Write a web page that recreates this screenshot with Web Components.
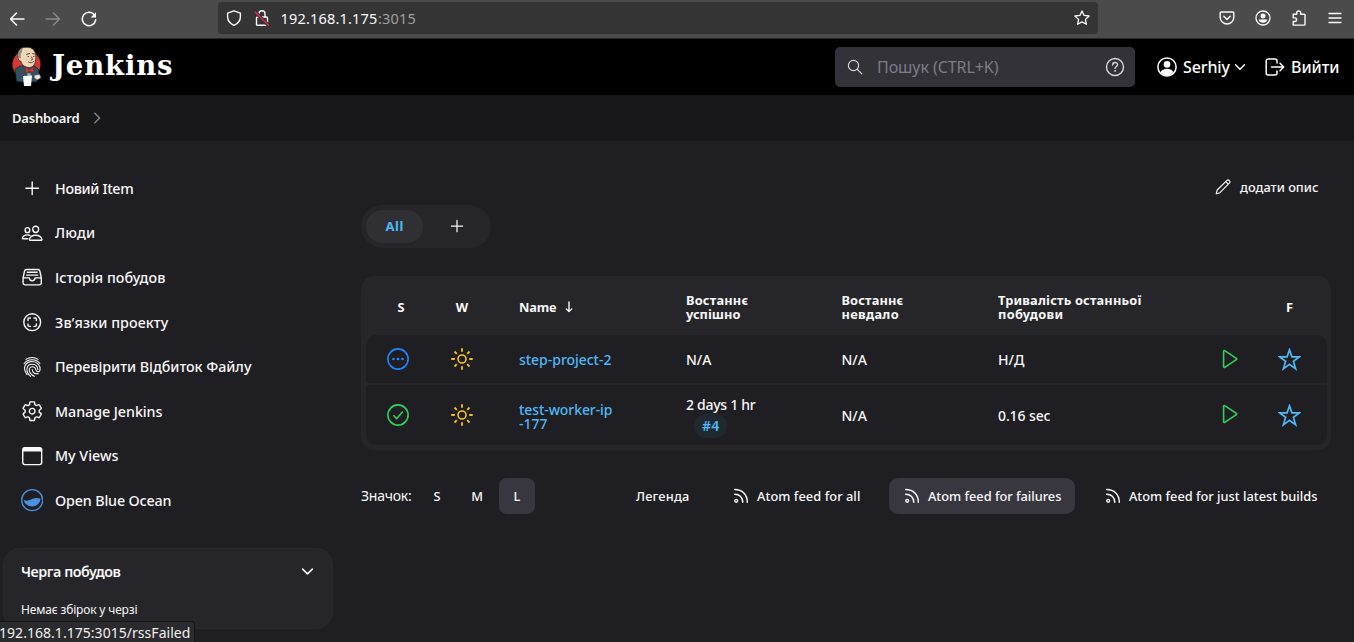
<!DOCTYPE html>
<html lang="uk">
<head>
<meta charset="utf-8">
<title>Dashboard [Jenkins]</title>
<style>
html,body{margin:0;height:100%}
body{background:#1f1e23;color:#f8f8f8;font-family:"Noto Sans","Open Sans",sans-serif;overflow:hidden;width:1354px;height:642px;position:relative}
</style>
</head>
<body>
<browser-bar></browser-bar>
<app-header></app-header>
<bread-crumbs></bread-crumbs>
<dashboard-page></dashboard-page>
<link-status></link-status>
<script>
const ICONS={
 back:['0 0 16 16','<path d="M15 8H1.5M7.5 2L1.5 8l6 6" stroke-width="1.5"/>'],
 fwd:['0 0 16 16','<path d="M1 8h13.5M8.500 2l6 6-6 6" stroke-width="1.300"/>'],
 reload:['0 0 16 16','<path d="M13.600 4.300A6.700 6.700 0 1 0 14.700 8.500" stroke-width="1.500"/><path d="M15 1.200v5.300H9.700z" fill="currentColor" stroke="none"/>'],
 shield:['0 0 16 16','<path d="M8 .8l6.400 2.300v3.600c0 3.800-2.600 6.900-6.400 8.600C4.200 13.600 1.600 10.500 1.600 6.700V3.100z" stroke-width="1.400"/>'],
 lock:['0 0 16 18','<rect x="2.500" y="8" width="11" height="8.300" rx="1" stroke-width="1.400"/><path d="M5 8V4.800a3 3 0 0 1 6 0V8" stroke-width="1.400"/><path d="M1.200 3l13.300 13.300" stroke="#343434" stroke-width="3.400"/><path d="M1.200 3l13.300 13.300" stroke="#e22850" stroke-width="1.400"/>'],
 bookmark:['0 0 16 16','<path d="M8 .9l2.100 4.500 5 .6-3.700 3.400 1 4.900L8 11.900l-4.400 2.400 1-4.900L.9 6l5-.6z" stroke-width="1.300"/>'],
 pocket:['0 0 16 16','<path d="M2.200 2h11.600a1 1 0 0 1 1 1v4.200a6.800 6.800 0 0 1-13.600 0V3a1 1 0 0 1 1-1zM4.800 6.300L8 9.400l3.200-3.100" stroke-width="1.400"/>'],
 account:['0 0 16 16','<circle cx="8" cy="8" r="7" stroke-width="1.300"/><circle cx="8" cy="6" r="2.500" fill="currentColor" stroke="none"/><path d="M3.700 9.500h8.600c-.4 2-2 3.300-4.300 3.300S4.100 11.500 3.700 9.500z" fill="currentColor" stroke="none"/>'],
 puzzle:['0 0 16 18','<path d="M2.200 5.300h3.500V4a2 2 0 0 1 4 0v1.300h3.500a.8.8 0 0 1 .8.800v9.200a.8.8 0 0 1-.8.800H2.200v-3.600h1.600a1.800 1.800 0 0 0 0-3.600H2.200z" stroke-width="1.400"/>'],
 menu:['0 0 14 14','<path d="M1 2.500h12M1 7h12M1 11.500h12" stroke-width="1.300"/>'],
 search:['0 0 16 16','<circle cx="6.500" cy="6.500" r="5.100" stroke-width="1.150"/><path d="M10.300 10.300l4.500 4.500" stroke-width="1.200"/>'],
 help:['0 0 20 20','<circle cx="10" cy="10" r="8.500" stroke-width="1.400"/><path d="M7.600 8c0-3.300 5-3.200 5-.4 0 1.900-2.500 1.800-2.500 4" stroke-width="1.400"/><circle cx="10.100" cy="14" r=".9" fill="currentColor" stroke="none"/>'],
 person:['0 0 20 20','<circle cx="10" cy="10" r="9.100" stroke-width="1.500"/><circle cx="10" cy="7.400" r="3.300" fill="currentColor" stroke="none"/><path d="M3.400 15.500c1.100-2.400 3.600-3.700 6.600-3.700s5.500 1.300 6.600 3.700C15 17.500 12.800 18.700 10 18.700S5 17.500 3.400 15.500z" fill="currentColor" stroke="none"/>'],
 down:['0 0 12 12','<path d="M1.500 3.800L6 8.200l4.500-4.400" stroke-width="1.400"/>'],
 right:['0 0 12 12','<path d="M3.800 1.200L8.600 6l-4.800 4.800" stroke-width="1.400"/>'],
 exit:['0 0 20 18','<path d="M12 5V3a2 2 0 0 0-2-2H3.200a2 2 0 0 0-2 2v12a2 2 0 0 0 2 2H10a2 2 0 0 0 2-2v-2M6.500 9h12M15 5.300L18.700 9 15 12.700" stroke-width="1.500"/>'],
 add:['0 0 512 512','<path d="M256 112v288M400 256H112" stroke-width="32"/>'],
 people:['0 0 512 512','<path stroke-width="32" d="M402 168c-2.930 40.670-33.100 72-66 72s-63.120-31.320-66-72c-3-42.310 26.370-72 66-72s69 30.460 66 72zM336 304c-65.170 0-127.840 32.370-143.540 95.410-2.080 8.340 3.150 16.590 11.720 16.590h263.650c8.570 0 13.770-8.250 11.720-16.590C463.850 335.360 401.180 304 336 304zM200 185.940c-2.340 32.480-26.720 58.060-53 58.060s-50.700-25.570-53-58.060C91.610 152.150 115.340 128 147 128s55.390 24.770 53 57.940zM206 306c-18.050-8.270-37.930-11.450-59-11.450-52 0-102.100 25.850-114.650 76.200-1.650 6.660 2.530 13.250 9.370 13.250H154"/>'],
 tray:['0 0 512 512','<path stroke-width="32" d="M384 80H128c-26 0-43 14-48 40L48 272v112a48.140 48.140 0 0048 48h320a48.140 48.140 0 0048-48V272l-32-152c-5-27-23-40-48-40zM48 272h144M320 272h144M192 272a64 64 0 00128 0M144 144h224M128 208h256"/>'],
 scan:['0 0 512 512','<path stroke-width="32" d="M448 256c0-106-86-192-192-192S64 150 64 256s86 192 192 192 192-86 192-192zM296 352h32a24 24 0 0024-24v-32M352 216v-32a24 24 0 00-24-24h-32M216 160h-32a24 24 0 00-24 24v32M160 296v32a24 24 0 0024 24h32"/>'],
 finger:['0 0 22 24','<g stroke-width="1.150"><path d="M4.500 3.600C8.300 1 13.800 1 17.600 3.600"/><path d="M2.300 8.400C6.200 2.700 15.800 2.600 19.700 8.200"/><path d="M3.700 17.300C.9 10.500 5.300 6 11 6s9.500 4.200 8.900 9.200c-.4 2.700-4 2.700-4.500.2C15 13 13.500 11.700 11.200 11.700c-3.600 0-4.200 4-2.100 7 1.200 1.800 2.700 2.800 4.600 3.500"/><path d="M9.400 22.300C3.500 17.200 4.300 8.900 11 8.900c3.700 0 6.200 2.400 6.500 6"/><path d="M11.200 14.700c.2 3.500 3 5.300 6.700 4.600"/><path d="M5.700 20.500c-.7-1-1.300-2-1.700-3"/></g>'],
 gear:['0 0 512 512','<path stroke-width="32" d="M262.290 192.310a64 64 0 1057.400 57.400 64.130 64.130 0 00-57.400-57.400zM416.390 256a154.340 154.340 0 01-1.530 20.790l45.210 35.460a10.810 10.810 0 012.450 13.750l-42.770 74a10.810 10.810 0 01-13.140 4.590l-44.900-18.080a16.110 16.110 0 00-15.170 1.750A164.480 164.480 0 01325 400.800a15.940 15.940 0 00-8.820 12.140l-6.730 47.890a11.080 11.080 0 01-10.680 9.170h-85.540a11.110 11.110 0 01-10.690-8.870l-6.720-47.820a16.070 16.070 0 00-9-12.220 155.300 155.300 0 01-21.460-12.570 16 16 0 00-15.110-1.710l-44.890 18.070a10.810 10.810 0 01-13.140-4.580l-42.770-74a10.800 10.800 0 012.450-13.750l38.210-30a16.050 16.050 0 006-14.080c-.36-4.170-.58-8.330-.58-12.500s.21-8.270.58-12.350a16 16 0 00-6.070-13.940l-38.190-30A10.810 10.810 0 0149.480 186l42.770-74a10.810 10.810 0 0113.140-4.590l44.900 18.080a16.110 16.110 0 0015.170-1.750A164.480 164.480 0 01187 111.200a15.940 15.940 0 008.820-12.140l6.730-47.890A11.080 11.080 0 01213.230 42h85.540a11.110 11.110 0 0110.690 8.870l6.720 47.820a16.070 16.070 0 009 12.220 155.300 155.300 0 0121.460 12.570 16 16 0 0015.110 1.710l44.890-18.070a10.810 10.810 0 0113.140 4.580l42.770 74a10.800 10.800 0 01-2.450 13.750l-38.210 30a16.050 16.050 0 00-6.050 14.080c.33 4.140.55 8.300.55 12.470z"/>'],
 windowi:['0 0 22 22','<rect x="1.700" y="2.700" width="18.600" height="16.600" rx="2" stroke-width="1.400"/><path d="M1.700 6.300V4.500a2 2 0 0 1 2-2h14.600a2 2 0 0 1 2 2v1.800z" fill="currentColor" stroke="none"/>'],
 ocean:['0 0 22 22','<circle cx="11" cy="11" r="10.300" stroke="#4a90e2" stroke-width="1.300"/><path d="M2.500 10.500c2.500 1.600 5 .9 7.500-.2 3-1.400 5.500-2.100 9.400-.6A8.600 8.600 0 0 1 2.500 10.500z" fill="#4a90e2" stroke="none"/>'],
 pencil:['0 0 16 16','<path d="M1.200 14.800l1-3.800L11.700 1.600a1.700 1.700 0 0 1 2.600 2.600L4.900 13.700zM10.700 2.700l2.500 2.500" stroke-width="1.150"/>'],
 sort:['0 0 8 12','<path d="M4 1v9.500M1.300 7.900L4 10.600l2.700-2.700" stroke-width="1.400"/>'],
 dots:['0 0 22 22','<circle cx="11" cy="11" r="10.100" stroke-width="1.600"/><g fill="currentColor" stroke="none"><circle cx="6.500" cy="11" r="1.300"/><circle cx="11" cy="11" r="1.300"/><circle cx="15.500" cy="11" r="1.300"/></g>'],
 ok:['0 0 22 22','<circle cx="11" cy="11" r="10.100" stroke-width="1.600"/><path d="M6.900 11.700l2.700 3L15.300 8" stroke-width="1.600"/>'],
 sun:['0 0 22 22','<circle cx="11" cy="11" r="4" stroke-width="1.600"/><path stroke-linecap="butt" d="M11 .3v3.400M11 18.300v3.400M.3 11h3.400M18.300 11h3.400M3.500 3.500L5.800 5.800M16.200 16.200l2.300 2.300M3.500 18.500l2.300-2.300M16.200 5.800l2.300-2.300" stroke-width="1.800"/>'],
 play:['0 0 16 20','<path d="M1.600 2.300v15.400a.7.7 0 0 0 1.100.6L14.300 10.700a.8.8 0 0 0 0-1.400L2.700 1.700a.7.7 0 0 0-1.100.6z" stroke-width="1.600"/>'],
 star:['0 0 22 22','<path stroke-linejoin="miter" d="M11 1.700l2.300 6.800h7.100l-5.700 4.200 2.200 7.200-5.900-4.300-5.900 4.300 2.200-7.200L1.600 8.500h7.100z" stroke-width="1.600"/>'],
 rss:['0 0 16 16','<circle cx="3.200" cy="12.800" r="1.400" stroke-width="1.400"/><path d="M1.700 6.200c4.800 0 8.100 3.300 8.100 8.100M1.700 1.600c7.500 0 12.600 5.100 12.600 12.600" stroke-width="1.500"/>'],
 logo:['0 0 44 48','<g stroke-linejoin="round"><circle cx="20.500" cy="22.500" r="14" fill="#d33833" stroke="none"/><path d="M9.500 27l5-3h14l4.500 4v6l-2.500 6H14l-3.500-.8z" fill="#335061" stroke="#101820" stroke-width=".7"/><path d="M12.500 17.500C10.500 10.500 12.500 5.600 20 5.200c7.500-.3 10 4.500 9.800 10.300-.2 6.500-2.300 9.700-6.300 10-4.500.2-8-3-8.500-6.300-1.200.2-2.100-.8-2.500-1.700z" fill="#f0d6b7" stroke="#33271e" stroke-width=".8"/><path d="M12.700 15.800c-1-4 .8-8 4-9.700-.8 2.600-.6 4.500-2 6-.5 1 .4 3 .1 4z" fill="#8a8580" stroke="none"/><path d="M20.500 12.500l3-1M26.500 11.500l2 .7M22 14.500h.6M27.600 14.500h.6M25.500 15l1.200 2.500-1.500.5M22.500 20c2 1.200 3.700 1 5.200-.5" stroke="#4d382b" stroke-width=".9"/><path d="M19.500 25l3.500 3 4.500-3.500v6l-4.500-1.500-3.300 2.500z" fill="#d33833" stroke="#801d1a" stroke-width=".5"/><path d="M21 31l4 .5-1 3h-2z" fill="#91a8b5" stroke="none"/><path d="M17 34l9-.5-1 10.500h-7z" fill="#fff" stroke="none"/><path d="M28.500 33.300l5.300-.7 1 3.200-3.200 2-3-1.500z" fill="#eee6df" stroke="#6b6864" stroke-width=".5"/></g>']
};
const define=(name,css,html)=>customElements.define(name,class extends HTMLElement{
  connectedCallback(){
    if(this.shadowRoot)return;
    this.attachShadow({mode:'open'}).innerHTML=`<style>*{box-sizing:border-box}${css}</style>${html}`;
  }
});
customElements.define('ui-icon',class extends HTMLElement{
  connectedCallback(){
    if(this.shadowRoot)return;
    const [box,body]=ICONS[this.getAttribute('name')];
    const w=this.getAttribute('w'),h=this.getAttribute('h')||w;
    this.attachShadow({mode:'open'}).innerHTML=`<style>:host{display:block;flex:none;width:${w}px;height:${h}px}svg{display:block}</style><svg width="${w}" height="${h}" viewBox="${box}" fill="none" stroke="currentColor" stroke-linecap="round" stroke-linejoin="round">${body}</svg>`;
  }
});
/* A single-line label that tracks its letters to fill a given width, with 1px side bearings. */
customElements.define('ui-label',class extends HTMLElement{
  connectedCallback(){
    if(this.shadowRoot)return;
    const w=+this.getAttribute('w');
    this.attachShadow({mode:'open'}).innerHTML=`<style>:host{display:block;flex:none;white-space:pre;line-height:1}span{display:inline-block;${w?'margin-left:1px':''}}</style><span><slot></slot></span>`;
    if(!w)return;
    const s=this.shadowRoot.querySelector('span');
    this.style.width=w+'px';
    s.style.letterSpacing=((w-1.6-s.getBoundingClientRect().width)/this.textContent.length)+'px';
  }
});
define('browser-bar',`:host{display:flex;align-items:flex-start;height:39px;background:#4b4b4b;border-bottom:1px solid #29292b;color:#fbfbfe;box-sizing:border-box}
nav{display:flex;align-items:center;height:37px;width:218px;padding-left:9px;gap:20px}.off{color:#8b8b8b}
.url{display:flex;align-items:center;width:880px;height:32px;margin-top:2px;background:#343434;border-radius:4px;padding:0 8px;font-size:14.500px}
.url ui-icon:last-child{margin-left:auto}.port{color:#a0a0a0}
.tools{display:flex;align-items:center;height:36px;margin-left:121px;gap:20.200px}`,
`<nav><ui-icon name="back" w="16"></ui-icon><ui-icon class="off" name="fwd" w="16"></ui-icon><ui-icon name="reload" w="16"></ui-icon></nav>
<div class="url"><ui-icon name="shield" w="16"></ui-icon><ui-icon name="lock" w="16" h="18" style="margin:0 9.500px 0 12px"></ui-icon><ui-label w="98.500">192.168.1.175</ui-label><ui-label class="port" w="39.500" style="margin-left:-1px">:3015</ui-label><ui-icon name="bookmark" w="16"></ui-icon></div>
<div class="tools"><ui-icon name="pocket" w="16"></ui-icon><ui-icon name="account" w="16"></ui-icon><ui-icon name="puzzle" w="16" h="18"></ui-icon><ui-icon name="menu" w="14"></ui-icon></div>`);
define('app-header',`:host{display:flex;align-items:center;height:56px;background:#000;color:#fff;font-size:16px;font-weight:500}
.logo{margin:-2px 1px 0 6px}.name{font:bold 27.500px "DejaVu Serif",serif;line-height:1;margin-top:-3px}
.search{display:flex;align-items:center;width:300px;height:40px;background:#333238;border-radius:5px;margin-left:661px;padding:0 10px 0 12px;color:#7d7d86;font-weight:400}
.search ui-icon{color:#d6d6dc}`,
`<ui-icon class="logo" name="logo" w="44" h="48"></ui-icon><ui-label class="name" w="123">Jenkins</ui-label>
<div class="search"><ui-icon name="search" w="16"></ui-icon><ui-label w="123" style="margin-left:13px">Пошук (CTRL+K)</ui-label><ui-icon name="help" w="20" style="margin-left:auto"></ui-icon></div>
<ui-icon name="person" w="20" style="margin-left:22px"></ui-icon><ui-label w="48.500" style="margin-left:5px">Serhiy</ui-label><ui-icon name="down" w="12" style="margin-left:3.500px"></ui-icon>
<ui-icon name="exit" w="20" h="18" style="margin-left:19px"></ui-icon><ui-label w="50" style="margin-left:5px">Вийти</ui-label>`);
define('bread-crumbs',`:host{display:flex;align-items:center;height:46px;background:#18181a;padding-left:11px;font-size:13px;font-weight:600;gap:11px;box-sizing:border-box}ui-icon{color:#85858c}`,
`<ui-label w="69">Dashboard</ui-label><ui-icon name="right" w="12"></ui-icon>`);
define('side-link',`:host{display:flex;align-items:center;height:44.600px}.i{display:flex;justify-content:center;width:24px;margin:0 10px 0 20px}.t{padding-top:1.500px}`,`<div class="i"><slot name="icon"></slot></div><div class="t"><slot></slot></div>`);
const links=[['add',22.4,22.4,80,'Новий Item'],['people',22.4,22.4,42,'Люди'],['tray',22.4,22.4,112,'Історія побудов'],['scan',22.4,22.4,115,'Зв’язки проекту'],['finger',20,22,198,'Перевірити Відбиток Файлу'],['gear',22.4,22.4,109,'Manage Jenkins'],['windowi',22.4,22.4,65,'My Views'],['ocean',22.4,22.4,118,'Open Blue Ocean']];
define('side-panel',`:host{display:block;width:361px;padding-top:25px;font-size:14.300px;font-weight:500;box-sizing:border-box}`,
links.map(l=>`<side-link><ui-icon slot="icon" name="${l[0]}" w="${l[1]}" h="${l[2]}"></ui-icon><ui-label w="${l[3]}">${l[4]}</ui-label></side-link>`).join('')+'<build-queue></build-queue>');
define('build-queue',`:host{display:block;width:330px;height:81px;margin:25px 0 0 3px;background:#26252a;border:1px solid #29282d;border-radius:17px;padding:0 18px 0 16px;box-sizing:border-box}
.top{display:flex;align-items:center;justify-content:space-between;height:46px;font-weight:600}.none{font-size:12px;font-weight:400;margin-top:9px}`,
`<div class="top"><ui-label w="101">Черга побудов</ui-label><ui-icon name="down" w="13"></ui-icon></div><ui-label class="none" w="118">Немає збірок у черзі</ui-label>`);
define('view-tabs',`:host{display:flex;align-items:center;width:130px;height:43px;background:#26252a;border-radius:22px;padding:0 5px;box-sizing:border-box}
.all{display:flex;align-items:center;justify-content:center;width:57px;height:33px;border-radius:17px;background:#303034;color:#4cb9f5;font-size:13px;font-weight:700}ui-icon{margin:-1px 0 0 24px}`,
`<div class="all"><ui-label w="20">All</ui-label></div><ui-icon name="add" w="20"></ui-icon>`);
const cols='display:grid;grid-template-columns:64px 64px 167px 155.500px 156.500px 225px 64px 55px;align-items:center;box-sizing:border-box';
define('job-row',`:host{${cols};height:var(--h);background:#1f1e23;border-radius:var(--r);font-size:14px;font-weight:500}
ui-icon{justify-self:center}.c{padding:1px 0 0 24px}.link{color:#4cb9f5}`,
`<slot name="status"></slot><ui-icon name="sun" w="22" style="color:#f5c518"></ui-icon><div class="c link"><slot name="name"></slot></div><div class="c"><slot name="success"></slot></div><div class="c"><ui-label w="27">N/A</ui-label></div><div class="c"><slot name="time"></slot></div><slot name="run"></slot><ui-icon name="star" w="23" style="color:#4cb9f5"></ui-icon>`);
define('job-table',`:host{display:block;width:970px;height:174px;background:#26252a;border-radius:13px;padding:0 4px 0 5px;box-sizing:border-box}
.head{${cols};height:59px;padding-top:3px;font-size:12.800px;font-weight:700}.head ui-label{line-height:14px}.c{padding-left:24px}.m{justify-self:center;margin-top:-1px}.n{display:flex;gap:8px;align-items:center;margin-top:-1px}
job-row ui-icon{justify-self:center}.pill{width:33px;height:24px;border-radius:12px;background:#202930;color:#4cb9f5;display:flex;align-items:center;justify-content:center;margin:2px 0 0 9px;font-weight:600}`,
`<div class="head"><ui-label class="m" style="margin-left:6px">S</ui-label><ui-label class="m" w="14.500">W</ui-label><div class="c n"><ui-label w="39">Name</ui-label><ui-icon name="sort" w="8" h="12"></ui-icon></div><div class="c"><ui-label w="64">Востаннє</ui-label><ui-label w="56">успішно</ui-label></div><div class="c"><ui-label w="63.500">Востаннє</ui-label><ui-label w="59">невдало</ui-label></div><div class="c"><ui-label w="145">Тривалість останньої</ui-label><ui-label w="67">побудови</ui-label></div><span></span><ui-label class="m">F</ui-label></div>
<job-row style="--h:48px;--r:10px 10px 3px 3px"><ui-icon slot="status" name="dots" w="22" style="color:#1e87ff"></ui-icon><ui-label slot="name" w="94">step-project-2</ui-label><ui-label slot="success" w="27">N/A</ui-label><ui-label slot="time" w="28">Н/Д</ui-label><ui-icon slot="run" name="play" w="16" h="20" style="color:#30d158"></ui-icon></job-row>
<job-row style="--h:60px;--r:3px 3px 10px 10px;margin-top:2px"><ui-icon slot="status" name="ok" w="22" style="color:#30d158"></ui-icon><div slot="name" style="padding-top:2px"><ui-label w="95">test-worker-ip</ui-label><ui-label w="30">-177</ui-label></div><div slot="success" style="padding-top:5px"><ui-label w="71">2 days 1 hr</ui-label><div class="pill"><ui-label w="19">#4</ui-label></div></div><ui-label slot="time" w="54">0.16 sec</ui-label><ui-icon slot="run" name="play" w="16" h="20" style="color:#30d158;margin-top:-2px"></ui-icon></job-row>`);
define('feed-link',`:host{display:flex;align-items:center;height:36px;border-radius:9px;padding:0 13px 0 15px;gap:7px;box-sizing:border-box}:host([active]){background:#383740}`,`<ui-icon name="rss" w="16"></ui-icon><slot></slot>`);
define('table-footer',`:host{display:flex;align-items:center;width:970px;height:36px;font-size:12.800px;font-weight:500}
.t{font-size:14px;font-weight:400}.z{display:flex;align-items:center;justify-content:center;width:36px;height:36px;border-radius:8px;margin-left:4px}.on{background:#383740}.feeds{display:flex;gap:15px;margin-left:auto;align-items:center}`,
`<ui-label class="t" w="52" style="margin-left:-1px">Значок:</ui-label><div class="z"  style="margin-left:7px"><ui-label>S</ui-label></div><div class="z"><ui-label>M</ui-label></div><div class="z on"><ui-label>L</ui-label></div>
<div class="feeds"><ui-label w="55" style="margin-right:13px">Легенда</ui-label><feed-link><ui-label w="105">Atom feed for all</ui-label></feed-link><feed-link active><ui-label w="135">Atom feed for failures</ui-label></feed-link><feed-link><ui-label w="190">Atom feed for just latest builds</ui-label></feed-link></div>`);
define('dashboard-page',`:host{display:flex;height:501px;padding-top:0;box-sizing:border-box}main{width:970px}
.desc{display:flex;align-items:center;justify-content:flex-end;gap:8px;height:24px;margin-top:34px;padding-right:12px;font-size:12.800px;font-weight:500}
view-tabs{margin-top:6px}job-table{margin-top:28px}table-footer{margin-top:28px}`,
`<side-panel></side-panel><main><div class="desc"><ui-icon name="pencil" w="16"></ui-icon><ui-label w="80">додати опис</ui-label></div><view-tabs></view-tabs><job-table></job-table><table-footer></table-footer></main>`);
define('link-status',`:host{position:absolute;left:-2px;bottom:0;width:197px;height:21px;background:#2b2a2c;border:1px solid #151517;border-bottom:0;border-radius:0 4px 0 0;font-size:14px;color:#f0f0f2;display:flex;align-items:center;box-sizing:border-box;overflow:hidden}`,`<ui-label w="193" style="margin-left:-1px;padding-top:1px">192.168.1.175:3015/rssFailed</ui-label>`);
</script>
</body>
</html>
